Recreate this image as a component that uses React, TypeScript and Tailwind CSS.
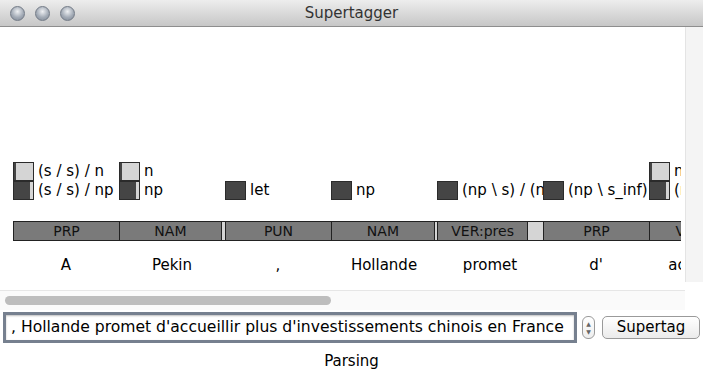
import React from 'react';

type Super = { cat: string; p: number };
type Col = { word: string; tag: string; tagP: number; supers: Super[] };

const cols: Col[] = [
	{ word: 'A', tag: 'PRP', tagP: 1, supers: [{ cat: '(s / s) / n', p: 0.08 }, { cat: '(s / s) / np', p: 0.84 }] },
	{ word: 'Pekin', tag: 'NAM', tagP: 0.96, supers: [{ cat: 'n', p: 0.08 }, { cat: 'np', p: 0.84 }] },
	{ word: ',', tag: 'PUN', tagP: 1, supers: [{ cat: 'let', p: 1 }] },
	{ word: 'Hollande', tag: 'NAM', tagP: 0.97, supers: [{ cat: 'np', p: 1 }] },
	{ word: 'promet', tag: 'VER:pres', tagP: 0.85, supers: [{ cat: '(np \\ s) / (np \\ s_inf)', p: 1 }] },
	{ word: "d'", tag: 'PRP', tagP: 1, supers: [{ cat: '(np \\ s_inf) / np', p: 1 }] },
	{ word: 'accueillir', tag: 'VER:infi', tagP: 1, supers: [{ cat: 'n', p: 0.08 }, { cat: '(np \\ s_inf) / np', p: 0.84 }] },
];

function SuperRow({ s }: { s: Super }) {
	return (
		<div className="flex h-[19px] items-center whitespace-nowrap">
			<div className="flex h-[19px] w-[21px] shrink-0 border border-[#2b2b2b] bg-[#d5d5d5]">
				<div className="h-full bg-[#454545]" style={{ width: `${s.p * 100}%` }} />
			</div>
			<span className="ml-[4px] text-[15px] leading-[19px] text-black">{s.cat}</span>
		</div>
	);
}

function Column({ c }: { c: Col }) {
	return (
		<div className="flex w-[106px] shrink-0 flex-col">
			<div className="flex h-[173px] flex-col justify-end overflow-hidden">
				{c.supers.map((s, i) => (
					<SuperRow key={i} s={s} />
				))}
			</div>
			<div className="mt-[21px] flex h-[20px] border-y border-l border-[#222]">
				<div
					className="flex items-center justify-center overflow-hidden whitespace-nowrap bg-[#7a7a7a] text-[14px] text-[#111]"
					style={{ width: `${c.tagP * 100}%` }}
				>
					{c.tag}
				</div>
				{c.tagP < 1 && <div className="flex-1 border-l border-[#222] bg-[#d5d5d5]" />}
			</div>
			<div className="mt-[15px] h-[18px] text-center text-[15px] leading-[18px] text-black">{c.word}</div>
		</div>
	);
}

export default function App() {
	return (
		<div className="flex h-[377px] w-[703px] flex-col overflow-hidden bg-white font-['DejaVu_Sans',sans-serif]">
			{/* title bar */}
			<div className="grid h-[27px] shrink-0 grid-cols-[1fr_auto_1fr] items-center border-b border-[#8e8e8e] bg-gradient-to-b from-[#ededed] to-[#c7c7c7]">
				<div className="flex items-center gap-[10px] pl-[10px]">
					{[0, 1, 2].map((i) => (
						<div
							key={i}
							className="h-[15px] w-[15px] rounded-full border border-[#737b87] bg-[radial-gradient(circle_at_50%_35%,#eef0f3,#a3abb6_55%,#7f8895)]"
						/>
					))}
				</div>
				<div className="text-[15px] text-[#333]">Supertagger</div>
				<div />
			</div>

			{/* scroll area */}
			<div className="flex h-[263px] shrink-0">
				<div className="flex w-[681px] overflow-hidden pl-[13px]">
					{cols.map((c, i) => (
						<Column key={i} c={c} />
					))}
				</div>
				<div className="w-[4px]" />
				<div className="h-[255px] w-[18px] border-l border-[#e4e4e4] bg-[#f4f4f4]" />
			</div>

			{/* horizontal scrollbar */}
			<div className="flex h-[20px] w-[685px] shrink-0 items-center border-t border-[#e6e6e6] bg-[#fafafa] pl-[5px]">
				<div className="h-[9px] w-[326px] rounded-full bg-[#bdbdbd]" />
			</div>

			{/* controls */}
			<div className="mt-[2px] flex items-center pl-[3px]">
				<div className="flex h-[31px] w-[574px] items-center overflow-hidden whitespace-nowrap border-[3px] border-[#76808f] bg-white pl-[5px] text-[15.6px] text-black shadow-[inset_0_1px_2px_rgba(0,0,0,0.25)]">
					, Hollande promet d'accueillir plus d'investissements chinois en France
				</div>
				<div className="ml-[5px] flex h-[23px] w-[13px] flex-col items-center justify-center rounded-[6px] border border-[#9a9a9a] bg-gradient-to-b from-white to-[#eeeeee] text-[6px] leading-[8px] text-[#666]">
					<span>▲</span>
					<span>▼</span>
				</div>
				<div className="ml-[7px] flex h-[23px] w-[98px] items-center justify-center rounded-[5px] border border-[#9a9a9a] bg-gradient-to-b from-white to-[#ebebeb] text-[15px] text-black">
					Supertag
				</div>
			</div>

			<div className="mt-[9px] text-center text-[15px] leading-[18px] text-black">Parsing</div>
		</div>
	);
}
